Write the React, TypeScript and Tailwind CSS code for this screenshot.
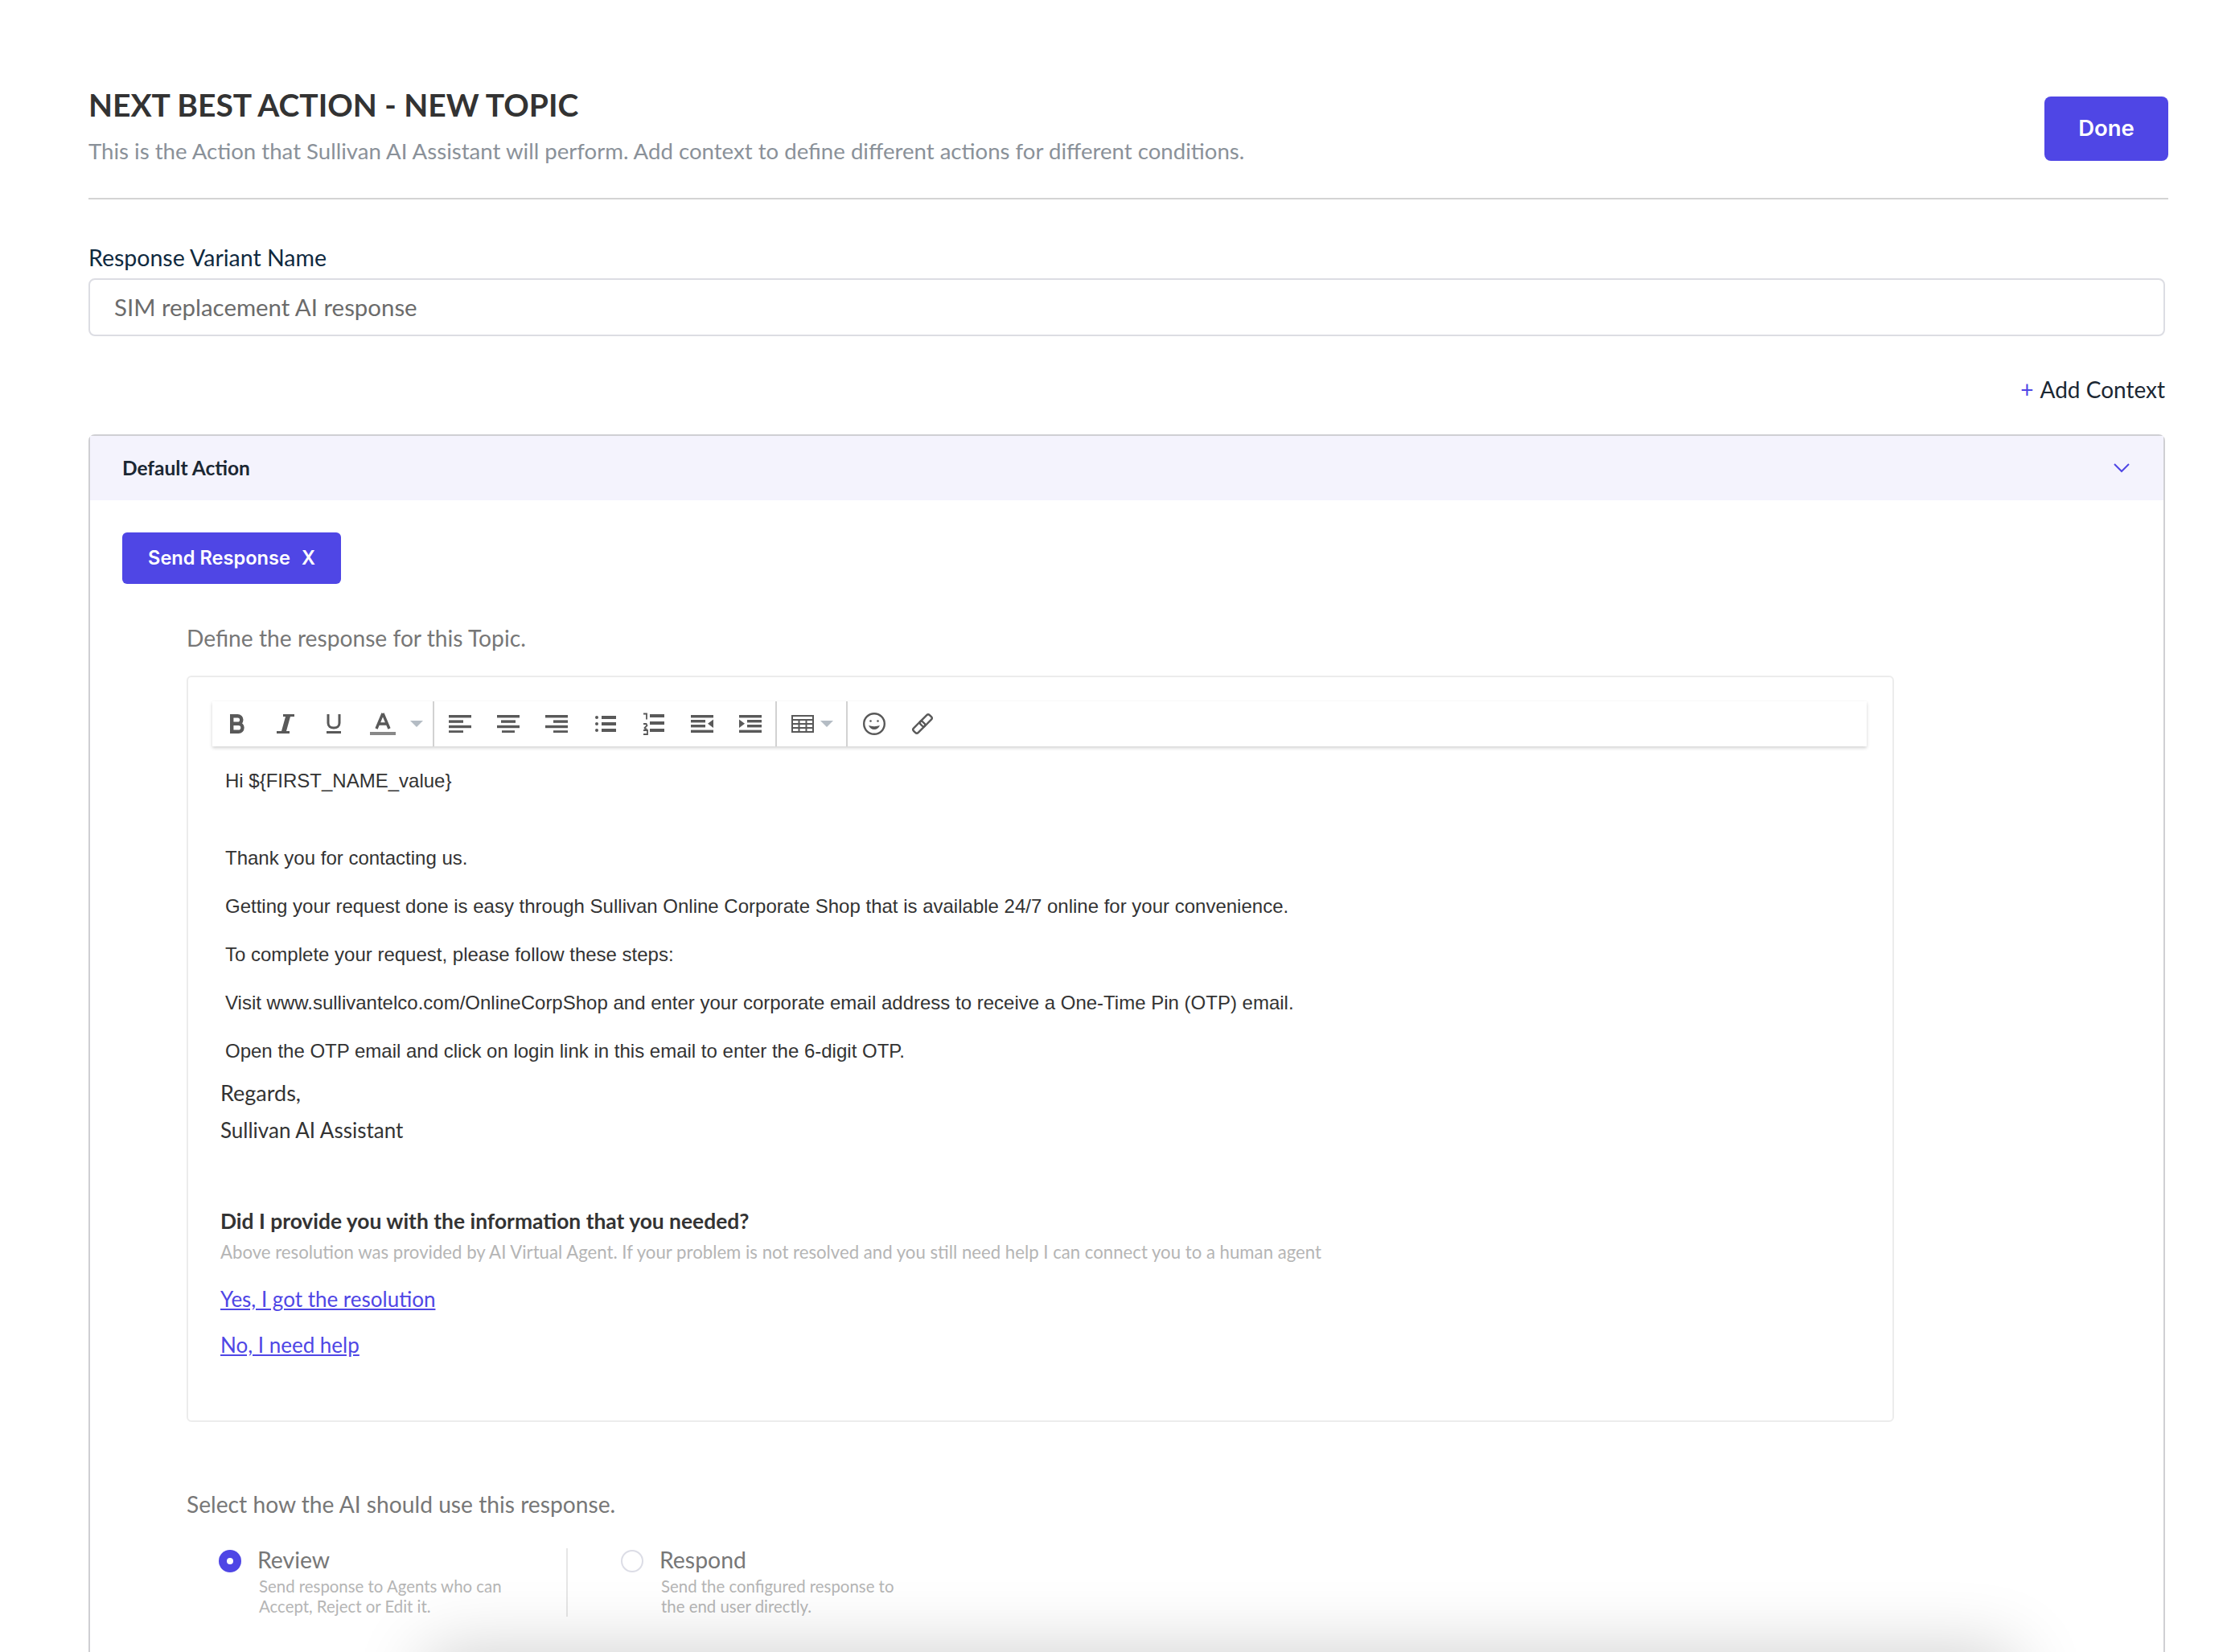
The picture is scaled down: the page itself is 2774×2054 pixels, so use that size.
const INDIGO = "#4f46e5";
const ICON = "#595959";

function Caret() {
  return (
    <svg width="16" height="8" viewBox="0 0 16 8">
      <path d="M0 0h16L8 8z" fill="#b4bcc4" />
    </svg>
  );
}

function Lines({ rows }: { rows: [number, number][] }) {
  return (
    <svg width="28" height="22" viewBox="0 0 28 22" fill={ICON}>
      {rows.map(([x, w], i) => (
        <rect key={i} x={x} y={i * 6.4} width={w} height="3.4" />
      ))}
    </svg>
  );
}

function ToolButton({ children, className }: { children: React.ReactNode; className?: string }) {
  return <div className={"flex h-full items-center justify-center " + (className ?? "w-[60px]")}>{children}</div>;
}

function Divider() {
  return <div className="h-full w-[2px] bg-[#d2d2d2]" />;
}

function Toolbar() {
  return (
    <div className="ml-[30px] mt-[30px] flex h-[56px] w-[2057px] items-center bg-white shadow-[0_2px_4px_rgba(0,0,0,0.18)]">
      <div className="w-[1px]" />
      <ToolButton>
        <svg width="18" height="24" viewBox="0 0 18 24" fill="none" stroke={ICON} strokeWidth="4.4">
          <path d="M2.2 2.200v19.600h8.300a5 5 0 0 0 0-10H2.200h7.300a4.800 4.800 0 0 0 0-9.600z" />
        </svg>
      </ToolButton>
      <ToolButton>
        <svg width="22" height="24" viewBox="0 0 22 24" fill={ICON}>
          <path d="M8 0h14v3h-5l-5 18h4v3H0v-3h6l5-18H8z" />
        </svg>
      </ToolButton>
      <ToolButton>
        <svg width="18" height="24" viewBox="0 0 18 24" fill="none" stroke={ICON} strokeWidth="3">
          <path d="M2 0v11c0 4 3 6 7 6s7-2 7-6V0" />
          <path d="M0 22.500h18" />
        </svg>
      </ToolButton>
      <ToolButton className="w-[62px]">
        <svg width="32" height="28" viewBox="0 0 32 28">
          <path d="M16 1l8 19M16 1L8 20M10.500 14h11" fill="none" stroke={ICON} strokeWidth="3.400" />
          <rect y="24" width="32" height="4" fill="#888888" />
        </svg>
      </ToolButton>
      <div className="flex w-[31px] pl-[3px]">
        <Caret />
      </div>
      <Divider />
      <div className="w-[2px]" />
      <ToolButton>
        <Lines rows={[[0, 28], [0, 18], [0, 28], [0, 18]]} />
      </ToolButton>
      <ToolButton>
        <Lines rows={[[0, 28], [5, 18], [0, 28], [6, 16]]} />
      </ToolButton>
      <ToolButton>
        <Lines rows={[[0, 28], [10, 18], [0, 28], [10, 18]]} />
      </ToolButton>
      <ToolButton className="w-[61px]">
        <svg width="26" height="22" viewBox="0 0 26 22" fill={ICON}>
          <circle cx="2" cy="3" r="2" />
          <circle cx="2" cy="11" r="2" />
          <circle cx="2" cy="19" r="2" />
          <rect x="8" y="1" width="18" height="4" />
          <rect x="8" y="9" width="18" height="4" />
          <rect x="8" y="17" width="18" height="4" />
        </svg>
      </ToolButton>
      <ToolButton>
        <svg width="26" height="28" viewBox="0 0 26 28">
          <path d="M0 1.500h4v7M0 14h3.500l1 2-3 3 1 1.500h2M0 22h5v5H0" fill="none" stroke={ICON} strokeWidth="1.800" />
          <g fill={ICON}>
            <rect x="8" y="2" width="18" height="4" />
            <rect x="8" y="11" width="18" height="4" />
            <rect x="8" y="20" width="18" height="4" />
          </g>
        </svg>
      </ToolButton>
      <ToolButton>
        <svg width="28" height="22" viewBox="0 0 28 22" fill={ICON}>
          <rect width="28" height="3.400" />
          <rect y="6" width="18" height="3.400" />
          <rect y="12" width="18" height="3.400" />
          <rect y="18.600" width="28" height="3.400" />
          <path d="M28 5.500v10.500l-7-5.250z" />
        </svg>
      </ToolButton>
      <ToolButton>
        <svg width="28" height="22" viewBox="0 0 28 22" fill={ICON}>
          <rect width="28" height="3.400" />
          <rect x="10" y="6" width="18" height="3.400" />
          <rect x="10" y="12" width="18" height="3.400" />
          <rect y="18.600" width="28" height="3.400" />
          <path d="M0 5.500v10.500l7-5.250z" />
        </svg>
      </ToolButton>
      <div className="w-[1px]" />
      <Divider />
      <div className="flex h-full w-[86px] items-center pl-[18px]">
        <svg width="28" height="22" viewBox="0 0 28 22" fill="none" stroke={ICON} strokeWidth="2">
          <rect x="1" y="1" width="26" height="20" strokeWidth="2" />
          <path d="M1 1h26v5H1zM1 11h26M1 16h26M9.500 6v15M18.500 6v15" />
        </svg>
        <div className="ml-[8px] flex">
          <Caret />
        </div>
      </div>
      <Divider />
      <ToolButton className="w-[66px]">
        <svg width="28" height="28" viewBox="0 0 28 28" fill="none" stroke={ICON} strokeWidth="2.400">
          <circle cx="14" cy="14" r="12.800" />
          <circle cx="9.500" cy="10.500" r="1.300" fill={ICON} stroke="none" />
          <circle cx="18.500" cy="10.500" r="1.300" fill={ICON} stroke="none" />
          <path d="M7 16c1.500 3.500 4 5 7 5s5.500-1.500 7-5c-4.500 1.500-9.500 1.500-14 0z" fill={ICON} stroke="none" />
        </svg>
      </ToolButton>
      <ToolButton className="w-[54px]">
        <svg width="28" height="28" viewBox="0 0 28 28" fill="none" stroke={ICON} strokeWidth="2.400">
          <g transform="rotate(-45 14 14)">
            <rect x="0" y="10" width="16" height="8" rx="2.500" />
            <rect x="12" y="10" width="16" height="8" rx="2.500" />
          </g>
        </svg>
      </ToolButton>
    </div>
  );
}

const steps = [
  "Getting your request done is easy through Sullivan Online Corporate Shop that is available 24/7 online for your convenience.",
  "To complete your request, please follow these steps:",
  "Visit www.sullivantelco.com/OnlineCorpShop and enter your corporate email address to receive a One-Time Pin (OTP) email.",
  "Open the OTP email and click on login link in this email to enter the 6-digit OTP.",
];

function Editor() {
  return (
    <div className="ml-[80px] mt-[29px] h-[928px] w-[2123px] rounded-[6px] border-2 border-[#ececec]">
      <Toolbar />
      <div className="pl-[40px] font-['Lato',sans-serif] text-[#333333]">
        <div className="pl-[6px] font-['Liberation_Sans',sans-serif] text-[24px] leading-[36px] text-[#333333]">
          <p className="mt-[25px]">{"Hi ${FIRST_NAME_value}"}</p>
          <p className="mt-[60px]">Thank you for contacting us.</p>
          {steps.map((s) => (
            <p key={s} className="mt-[24px]">
              {s}
            </p>
          ))}
        </div>
        <p className="mt-[16px] text-[27px] leading-[36px]">Regards,</p>
        <p className="mt-[10px] text-[26px] leading-[36px]">Sullivan AI Assistant</p>
        <p className="mt-[77px] text-[26.4px] font-bold leading-[36px]">Did I provide you with the information that you needed?</p>
        <p className="mt-[6px] text-[22.2px] leading-[30px] text-[#b5b5b5]">
          Above resolution was provided by AI Virtual Agent. If your problem is not resolved and you still need help I can connect you to a human agent
        </p>
        <p className="mt-[25px] text-[26px] leading-[36px] text-[#4f46e5] underline">Yes, I got the resolution</p>
        <p className="mt-[21px] text-[26px] leading-[36px] text-[#4f46e5] underline">No, I need help</p>
      </div>
    </div>
  );
}

function Choice({ label, lines, selected }: { label: string; lines: string[]; selected?: boolean }) {
  return (
    <div className="flex gap-[20px]">
      {selected ? (
        <div className="mt-[6px] flex h-[28px] w-[28px] items-center justify-center rounded-full bg-[#4f46e5]">
          <div className="h-[8px] w-[8px] rounded-full bg-white" />
        </div>
      ) : (
        <div className="mt-[6px] h-[28px] w-[28px] rounded-full border-2 border-[#dcdde6]" />
      )}
      <div>
        <div className="text-[28.4px] leading-[36px] text-[#777777]">{label}</div>
        <div className="ml-[2px] mt-[3px] text-[20.4px] leading-[25px] text-[#b5b5b5]">
          {lines.map((l) => (
            <div key={l}>{l}</div>
          ))}
        </div>
      </div>
    </div>
  );
}

export default function App() {
  return (
    <div className="relative h-[2054px] w-[2774px] overflow-hidden bg-white font-['Lato',sans-serif]">
      <div className="ml-[110px] mr-[78px] box-content flex h-[142px] items-start justify-between border-b-2 border-[#d4d4d4] pt-[104px]">
        <div className="-mb-[40px]">
          <h1 className="text-[39px] font-bold leading-[52px] text-[#333333]">NEXT BEST ACTION - NEW TOPIC</h1>
          <p className="mt-[14px] text-[27.6px] leading-[36px] text-[#8a9199]">
            This is the Action that Sullivan AI Assistant will perform. Add context to define different actions for different conditions.
          </p>
        </div>
        <button className="mt-[16px] flex h-[80px] w-[154px] items-center justify-center rounded-[8px] bg-[#4f46e5] font-['Inter',sans-serif] text-[27.5px] font-semibold text-white">
          Done
        </button>
      </div>

      <div className="ml-[110px] w-[2582px]">
        <label className="mt-[55px] block text-[28.500px] leading-[34px] text-[#0f2a3f]">Response Variant Name</label>
        <div className="mt-[9px] flex h-[72px] items-center rounded-[8px] border-2 border-[#dcdde3] pl-[30px] text-[29.400px] text-[#6b6b6b]">
          SIM replacement AI response
        </div>
        <div className="mt-[48px] flex justify-end text-[28px] leading-[36px] text-[#1b2733]">
          <span className="mr-[8px] text-[#4f46e5]">+</span>
          Add Context
        </div>

        <div className="mt-[38px] h-[1600px] rounded-[8px] border-2 border-[#cfcfd3]">
          <div className="flex h-[80px] items-center justify-between bg-[#f4f3fd] pl-[40px] pr-[42px]">
            <span className="text-[24.500px] font-bold text-[#1b2733]">Default Action</span>
            <svg width="20" height="12" viewBox="0 0 20 12" fill="none" stroke={INDIGO} strokeWidth="2">
              <path d="M1 1l9 9 9-9" />
            </svg>
          </div>
          <div className="pl-[40px]">
            <button className="mt-[40px] flex h-[64px] w-[272px] items-center justify-center gap-[14px] rounded-[6px] bg-[#4f46e5] font-['Inter',sans-serif] text-[23.6px] font-semibold text-white">
              <span>Send Response</span>
              <span>X</span>
            </button>
            <p className="ml-[80px] mt-[49px] text-[28.200px] leading-[36px] text-[#777777]">Define the response for this Topic.</p>
            <Editor />
            <p className="ml-[80px] mt-[84px] text-[28.200px] leading-[36px] text-[#777777]">Select how the AI should use this response.</p>
            <div className="ml-[120px] mt-[33px] flex">
              <div className="mt-[4px] w-[434px] border-r-2 border-[#e6e6e6]">
                <div className="-mt-[4px]">
                  <Choice label="Review" selected lines={["Send response to Agents who can", "Accept, Reject or Edit it."]} />
                </div>
              </div>
              <div className="pl-[66px]">
                <Choice label="Respond" lines={["Send the configured response to", "the end user directly."]} />
              </div>
            </div>
          </div>
        </div>
      </div>

      {/* shadow from the bar sitting just below the fold */}
      <div className="absolute left-[530px] top-[2054px] h-[100px] w-[1975px] shadow-[0_0_90px_rgba(0,0,0,0.2)]" />
    </div>
  );
}
